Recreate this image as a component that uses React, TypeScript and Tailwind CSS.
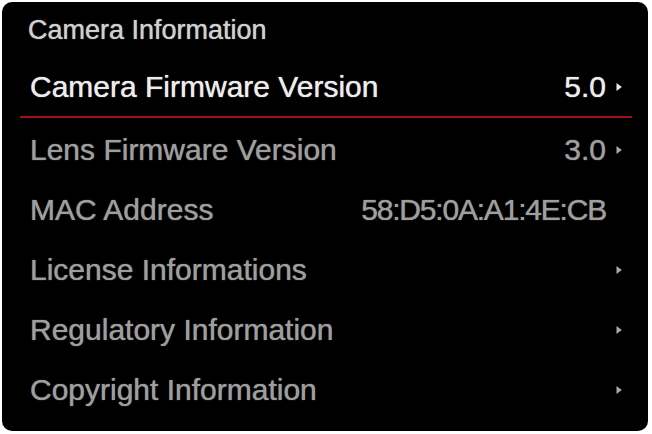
import React from "react";

const Arrow = ({ color }: { color: string }) => (
  <svg width="6" height="10" viewBox="0 0 6 10" className="shrink-0">
    <path d="M0.5 1 L5.8 5 L0.5 9 Z" fill={color} />
  </svg>
);

type Row = { label: string; value?: string; arrow?: boolean; selected?: boolean };

const rows: Row[] = [
  { label: "Lens Firmware Version", value: "3.0", arrow: true },
  { label: "MAC Address", value: "58:D5:0A:A1:4E:CB" },
  { label: "License Informations", arrow: true },
  { label: "Regulatory Information", arrow: true },
  { label: "Copyright Information", arrow: true },
];

export default function App() {
  return (
    <div
      className="w-[652px] h-[434px] bg-white pl-[2px] pt-[2px] overflow-hidden"
      style={{ fontFamily: '"Liberation Sans", Arial, sans-serif' }}
    >
      <div className="w-[646px] h-[429px] bg-black rounded-[10px] flex flex-col overflow-hidden [text-shadow:0_0_1px_currentColor]">
        <div className="h-[56px] shrink-0 flex items-center pl-[26px] text-[27px] leading-[27px] text-[#cfcfcf]">
          Camera Information
        </div>
        <div className="flex flex-col ml-[18px] mr-[16px]">
          <div className="h-[60px] flex items-center justify-between pl-[10px] pr-[10px] border-b-2 border-[#a3101a] text-[30px] leading-[30px] text-[#ececec]">
            <span>Camera Firmware Version</span>
            <span className="flex items-center gap-[10px]">
              <span>5.0</span>
              <Arrow color="#ececec" />
            </span>
          </div>
          {rows.map((r, i) => (
            <div
              key={r.label}
              className={
                i === 0
                  ? "h-[62px] pt-[2px] flex items-center justify-between pl-[10px] pr-[10px] text-[30px] leading-[30px] text-[#9e9e9e]"
                  : "h-[60px] flex items-center justify-between pl-[10px] pr-[10px] text-[30px] leading-[30px] text-[#9e9e9e]"
              }
            >
              <span>{r.label}</span>
              <span className="flex items-center gap-[10px]">
                {r.value && r.arrow && <span>{r.value}</span>}
                {r.value && !r.arrow && (
                  <span className="mr-[16px] tracking-[-1.2px]">{r.value}</span>
                )}
                {r.arrow && <Arrow color="#a8a8a8" />}
              </span>
            </div>
          ))}
        </div>
      </div>
    </div>
  );
}
